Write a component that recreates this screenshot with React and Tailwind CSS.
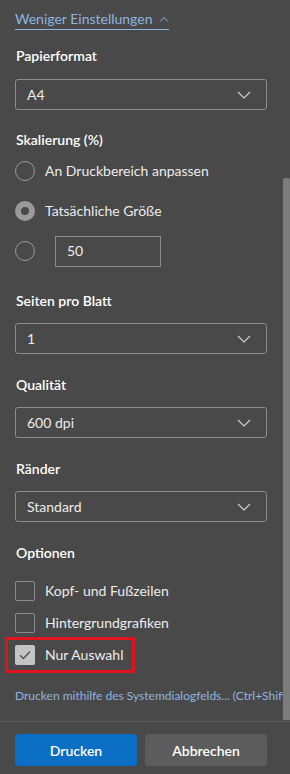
import React, { useState } from 'react';

const Chevron = () => (
  <svg width="14" height="8" viewBox="0 0 14 8" fill="none">
    <path d="M1 1l6 6 6-6" stroke="#d0d0d0" strokeWidth="1.2" />
  </svg>
);

const Select = ({ value }) => (
  <div className="ml-[15px] w-[252px] h-[31px] border border-[#8c8c8c] rounded-[3px] flex items-center justify-between pl-[11px] pr-[15px] text-[14px] leading-[20px] text-[#ececec]">
    <span>{value}</span>
    <Chevron />
  </div>
);

const Heading = ({ children, className = '' }) => (
  <div className={`px-[16px] text-[14px] leading-[20px] font-semibold text-white ${className}`}>{children}</div>
);

const Radio = ({ checked }) => (
  checked ? (
    <div className="w-[20px] h-[20px] rounded-full border-[6px] border-[#9a9a9a]" />
  ) : (
    <div className="w-[20px] h-[20px] rounded-full border border-[#9a9a9a]" />
  )
);

const Checkbox = ({ checked }) => (
  checked ? (
    <div className="w-[20px] h-[20px] rounded-[2px] bg-[#c4c4c4] flex items-center justify-center">
      <svg width="12" height="10" viewBox="0 0 12 10" fill="none">
        <path d="M1 5.2l3.4 3.3L11 1.5" stroke="#505050" strokeWidth="1.4" />
      </svg>
    </div>
  ) : (
    <div className="w-[20px] h-[20px] rounded-[2px] border border-[#8c8c8c]" />
  )
);

export default function App() {
  const [scale] = useState('actual');

  return (
    <div className="relative w-[290px] h-[774px] bg-[#494949] overflow-hidden" style={{ fontFamily: '"Segoe UI", Lato, "Liberation Sans", sans-serif' }}>
      <div className="h-[721px] flex flex-col">
        <div className="pt-[6px] px-[15px]">
          <div className="inline-flex items-center gap-[7px] border-b border-[#8fb4da] text-[14px] leading-[20px] text-[#8fb4e0]">
            <span>Weniger Einstellungen</span>
            <svg width="10" height="6" viewBox="0 0 10 6" fill="none">
              <path d="M1 5.5l4-4 4 4" stroke="#8fb4e0" strokeWidth="1" />
            </svg>
          </div>
        </div>

        <Heading className="mt-[16px]">Papierformat</Heading>
        <div className="mt-[13px]"><Select value="A4" /></div>

        <Heading className="mt-[20px]">Skalierung (%)</Heading>
        <div className="mt-[11px] px-[15px] flex flex-col gap-[20px] text-[14px] leading-[20px] text-[#ececec]">
          <div className="flex items-center gap-[10px] h-[20px]">
            <Radio checked={scale === 'fit'} />
            <span>An Druckbereich anpassen</span>
          </div>
          <div className="flex items-center gap-[10px] h-[20px]">
            <Radio checked={scale === 'actual'} />
            <span>Tatsächliche Größe</span>
          </div>
          <div className="flex items-center gap-[20px] h-[20px]">
            <Radio checked={scale === 'custom'} />
            <div className="shrink-0 w-[106px] h-[31px] border border-[#8c8c8c] flex items-center pl-[11px]">50</div>
          </div>
        </div>

        <Heading className="mt-[30px]">Seiten pro Blatt</Heading>
        <div className="mt-[12px]"><Select value="1" /></div>

        <Heading className="mt-[21px]">Qualität</Heading>
        <div className="mt-[12px]"><Select value="600 dpi" /></div>

        <Heading className="mt-[21px]">Ränder</Heading>
        <div className="mt-[12px]"><Select value="Standard" /></div>

        <Heading className="mt-[21px]">Optionen</Heading>
        <div className="mt-[18px] px-[15px] flex flex-col gap-[12px] text-[14px] leading-[20px] text-[#ececec]">
          <div className="flex items-center gap-[10px]">
            <Checkbox />
            <span>Kopf- und Fußzeilen</span>
          </div>
          <div className="flex items-center gap-[10px]">
            <Checkbox />
            <span>Hintergrundgrafiken</span>
          </div>
          <div className="relative flex items-center gap-[10px]">
            <Checkbox checked />
            <span>Nur Auswahl</span>
            <div className="absolute left-[-10px] top-[-8px] w-[130px] h-[36px] border-[3px] border-[#e0141e]" />
          </div>
        </div>

        <div className="mt-[23px] w-[283px] overflow-hidden pl-[15px] text-[12px] leading-[16px] text-[#8fb4e0] whitespace-nowrap">
          Drucken mithilfe des Systemdialogfelds... (Ctrl+Shift+P)
        </div>
      </div>

      <div className="absolute right-0 top-[178px] w-[7px] h-[542px] bg-[#7c7c7c] rounded-t-[2px]" />

      <div className="border-t border-[#5c5c5c] px-[15px] pt-[12px] flex gap-[8px]">
        <button className="w-[122px] h-[32px] bg-[#0b6ec5] rounded-[3px] text-[14px] font-semibold text-white">Drucken</button>
        <button className="w-[122px] h-[32px] bg-[#5c5c5c] rounded-[3px] text-[14px] font-semibold text-white">Abbrechen</button>
      </div>
    </div>
  );
}
